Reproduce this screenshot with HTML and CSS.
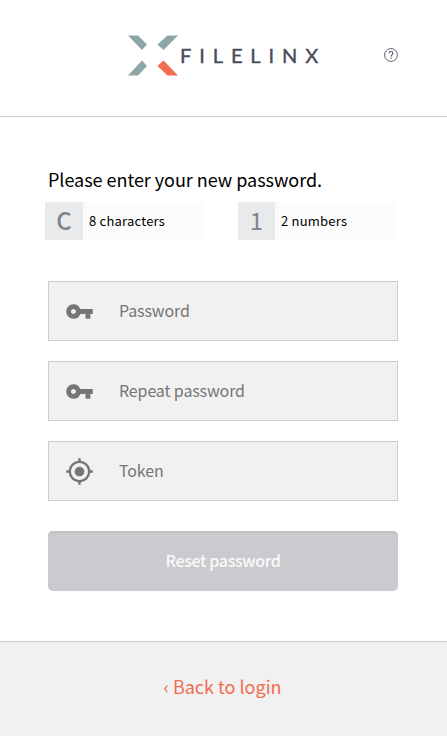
FILE: index.html
```html
<!DOCTYPE html>
<html lang="en">
<head>
  <meta charset="UTF-8">
  <meta name="viewport" content="width=device-width, initial-scale=1">
  <title>Filelinx</title>
  <link rel="stylesheet" href="styles.css">
</head>
<body>

<header class="header">
  <div class="logo">
    <svg class="logo-mark" width="50" height="41" viewBox="0 0 50 41">
      <path fill="#8ea5a5" d="M0 0.500h10L19 9.500l-5 5.500z"/>
      <path fill="#8ea5a5" d="M50 0.500H39.500L29.500 9.500l6 5.500z"/>
      <path fill="#8ea5a5" d="M0 40.500h10L19 31l-5-5.500z"/>
      <path fill="#f26c4f" d="M50 40.500H39.500L29.500 31l6-5.500z"/>
    </svg>
    <span class="logo-text">FILELINX</span>
  </div>
  <a class="help" href="#" aria-label="Help">
    <svg width="14" height="14" viewBox="0 0 14 14" fill="none" stroke="#4b5160">
      <circle cx="7" cy="7" r="6.400" stroke-width="0.900"/>
      <path stroke-width="1.100" d="M5 5.300C5 4.100 5.900 3.500 7 3.500s2 .7 2 1.700C9 6.500 7.100 6.700 7.100 8.500M7.100 9.500v1.200"/>
    </svg>
  </a>
</header>

<main class="content">
  <h1 class="title">Please enter your new password.</h1>

  <div class="rules">
    <div class="rule"><span class="rule-icon bold">C</span><span class="rule-text">8 characters</span></div>
    <div class="rule"><span class="rule-icon narrow">1</span><span class="rule-text">2 numbers</span></div>
  </div>

  <form class="form">
    <label class="field">
      <svg class="icon" viewBox="0 0 24 24"><path d="M12.650 10A5.990 5.990 0 0 0 7 6c-3.310 0-6 2.690-6 6s2.690 6 6 6a5.990 5.990 0 0 0 5.650-4H17v4h4v-4h2v-4H12.650zM7 14c-1.100 0-2-.9-2-2s.9-2 2-2 2 .9 2 2-.9 2-2 2z"/></svg>
      <input type="password" placeholder="Password">
    </label>
    <label class="field">
      <svg class="icon" viewBox="0 0 24 24"><path d="M12.650 10A5.990 5.990 0 0 0 7 6c-3.310 0-6 2.690-6 6s2.690 6 6 6a5.990 5.990 0 0 0 5.650-4H17v4h4v-4h2v-4H12.650zM7 14c-1.100 0-2-.9-2-2s.9-2 2-2 2 .9 2 2-.9 2-2 2z"/></svg>
      <input type="password" placeholder="Repeat password">
    </label>
    <label class="field">
      <svg class="icon" viewBox="0 0 24 24"><path d="M12 8c-2.210 0-4 1.790-4 4s1.790 4 4 4 4-1.790 4-4-1.790-4-4-4zm8.940 3A8.994 8.994 0 0 0 13 3.060V1h-2v2.060A8.994 8.994 0 0 0 3.060 11H1v2h2.060A8.994 8.994 0 0 0 11 20.940V23h2v-2.060A8.994 8.994 0 0 0 20.940 13H23v-2h-2.060zM12 19c-3.870 0-7-3.130-7-7s3.130-7 7-7 7 3.130 7 7-3.130 7-7 7z"/></svg>
      <input type="text" placeholder="Token">
    </label>
    <button class="submit" type="button">Reset password</button>
  </form>
</main>

<footer class="footer">
  <a href="#">‹ Back to login</a>
</footer>

</body>
</html>
```

FILE: styles.css
```css
* {
  box-sizing: border-box;
}

body {
  margin: 0;
  min-height: 100vh;
  display: flex;
  flex-direction: column;
  background: #fff;
  color: #000;
  font-family: "Noto Sans CJK JP", "Noto Sans", sans-serif;
}

/* Header */
.header {
  height: 117px;
  padding: 35px 49px 0 128px;
  display: flex;
  justify-content: space-between;
  align-items: flex-start;
  border-bottom: 1px solid #ccc;
}

.logo {
  display: flex;
}

.logo-mark {
  display: block;
}

.logo-text {
  margin-left: 2px;
  font-family: Lato, sans-serif;
  font-size: 20px;
  line-height: 40px;
  letter-spacing: 7.9px;
  color: #474c5a;
  -webkit-text-stroke: 0.4px #474c5a;
}

.help {
  margin-top: 13px;
}

.help svg {
  display: block;
}

/* Content */
.content {
  padding: 48px 49px 50px 48px;
}

.title {
  margin: 0;
  font-size: 18px;
  font-weight: 400;
  line-height: 28px;
  letter-spacing: -0.03px;
}

/* Password rules */
.rules {
  display: flex;
  gap: 35px;
  margin: 9px 0 41px -3px;
}

.rule {
  display: flex;
  width: 158px;
  height: 38px;
  line-height: 37px;
  background: #fcfcfc;
}

.rule-icon {
  width: 38px;
  text-align: center;
  font-size: 24px;
  line-height: 36px;
  background: #e9eaec;
  color: #7f838b;
}

.rule-icon.bold {
  font-weight: 500;
}

.rule-icon.narrow {
  width: 37px;
}

.rule-text {
  padding-left: 6px;
  font-size: 13px;
  letter-spacing: 0.22px;
}

/* Form */
.form {
  display: flex;
  flex-direction: column;
  gap: 20px;
}

.field {
  display: flex;
  align-items: center;
  height: 60px;
  padding-left: 16px;
  background: #f1f1f1;
  border: 1px solid #ccc;
}

.icon {
  width: 29px;
  height: 29px;
  margin-top: 1px;
  fill: #757575;
}

.field input {
  flex: 1;
  min-width: 0;
  height: 58px;
  padding: 0 10px 2px 25px;
  border: 0;
  outline: 0;
  background: none;
  font: 16px "Noto Sans CJK JP", "Noto Sans", sans-serif;
  letter-spacing: -0.13px;
}

.field input::placeholder {
  color: #757575;
}

.submit {
  height: 60px;
  margin-top: 10px;
  padding: 0 0 2px;
  border: 0;
  border-radius: 5px;
  background: #cacbce;
  box-shadow: inset 0 2px 0 #c0c2c3;
  color: #fafafa;
  font: 500 16px "Noto Sans CJK JP", "Noto Sans", sans-serif;
  letter-spacing: -0.35px;
}

/* Footer */
.footer {
  flex: 1;
  padding: 30px 2px 0 0;
  border-top: 1px solid #ccc;
  background: #f1f1f1;
  text-align: center;
  line-height: 28px;
}

.footer a {
  color: #f26c4f;
  font-size: 18px;
  text-decoration: none;
}
```
